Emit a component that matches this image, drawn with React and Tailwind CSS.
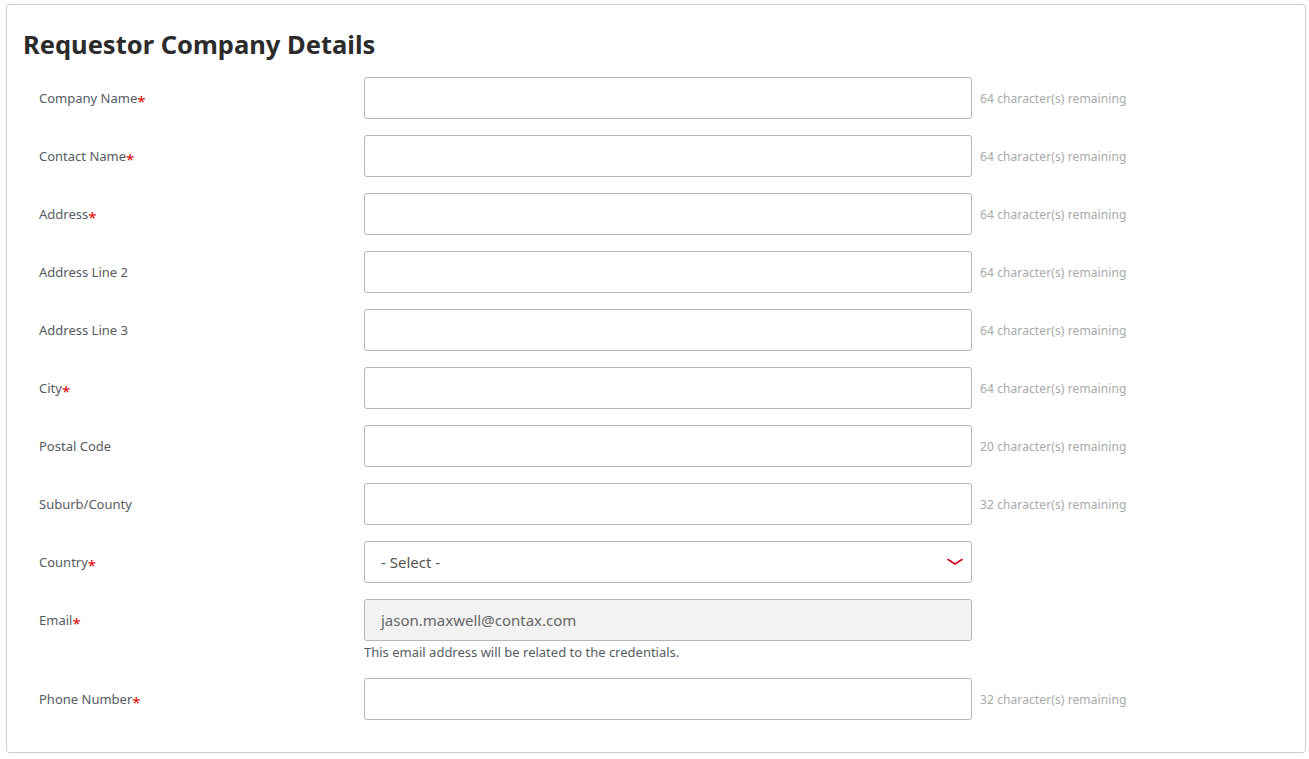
import React from "react";

const rows = [
  { label: "Company Name", req: true, rem: 64 },
  { label: "Contact Name", req: true, rem: 64 },
  { label: "Address", req: true, rem: 64 },
  { label: "Address Line 2", req: false, rem: 64 },
  { label: "Address Line 3", req: false, rem: 64 },
  { label: "City", req: true, rem: 64 },
  { label: "Postal Code", req: false, rem: 20 },
  { label: "Suburb/County", req: false, rem: 32 },
];

function Star() {
  return <span className="text-[#e00000] text-[15px] leading-none relative top-[2px]">*</span>;
}

function Label({ text, req }) {
  return (
    <div className="w-[341px] shrink-0 pl-[16px] pt-[2px] text-[13px] text-[#555b63] flex items-center h-[42px]">
      <span>{text}</span>
      {req && <Star />}
    </div>
  );
}

export default function App() {
  return (
    <div className="w-[1309px] h-[759px] bg-white pt-[4px] pl-[6px]" style={{ fontFamily: '"Noto Sans", "Open Sans", sans-serif' }}>
      <div className="w-[1300px] h-[749px] border border-[#cfcfcf] rounded-[3px] pl-[16px] pt-[24px]">
        <h1 className="text-[25.5px] font-bold text-[#2b2b2b] leading-[32px] -translate-y-[1px]">Requestor Company Details</h1>
        <div className="mt-[16px] flex flex-col gap-[16px]">
          {rows.map((r) => (
            <div key={r.label} className="flex items-center">
              <Label text={r.label} req={r.req} />
              <div className="w-[608px] h-[42px] border border-[#b5b5b5] rounded-[3px] bg-white" />
              <div className="ml-[8px] pt-[2px] text-[12px] text-[#a9a9a9] tracking-[0.1px]">{r.rem} character(s) remaining</div>
            </div>
          ))}
          <div className="flex items-center">
            <Label text="Country" req />
            <div className="w-[608px] h-[42px] border border-[#b5b5b5] rounded-[3px] bg-white flex items-center justify-between pl-[16px] pr-[8px]">
              <span className="text-[15px] text-[#555]">- Select -</span>
              <svg width="16" height="8" viewBox="0 0 16 8" fill="none">
                <path d="M1 1.5 L8 6 L15 1.5" stroke="#d8001c" strokeWidth="1.6" strokeLinecap="round" strokeLinejoin="round" />
              </svg>
            </div>
          </div>
          <div className="flex items-start">
            <Label text="Email" req />
            <div className="flex flex-col">
              <div className="w-[608px] h-[42px] border border-[#b5b5b5] rounded-[3px] bg-[#f2f2f2] flex items-center pl-[16px]">
                <span className="text-[15px] text-[#666]">jason.maxwell@contax.com</span>
              </div>
              <div className="text-[13px] text-[#555b63] leading-[20px] mt-[1px]">This email address will be related to the credentials.</div>
            </div>
          </div>
          <div className="flex items-center">
            <Label text="Phone Number" req />
            <div className="w-[608px] h-[42px] border border-[#b5b5b5] rounded-[3px] bg-white" />
            <div className="ml-[8px] pt-[2px] text-[12px] text-[#a9a9a9] tracking-[0.1px]">32 character(s) remaining</div>
          </div>
        </div>
      </div>
    </div>
  );
}
